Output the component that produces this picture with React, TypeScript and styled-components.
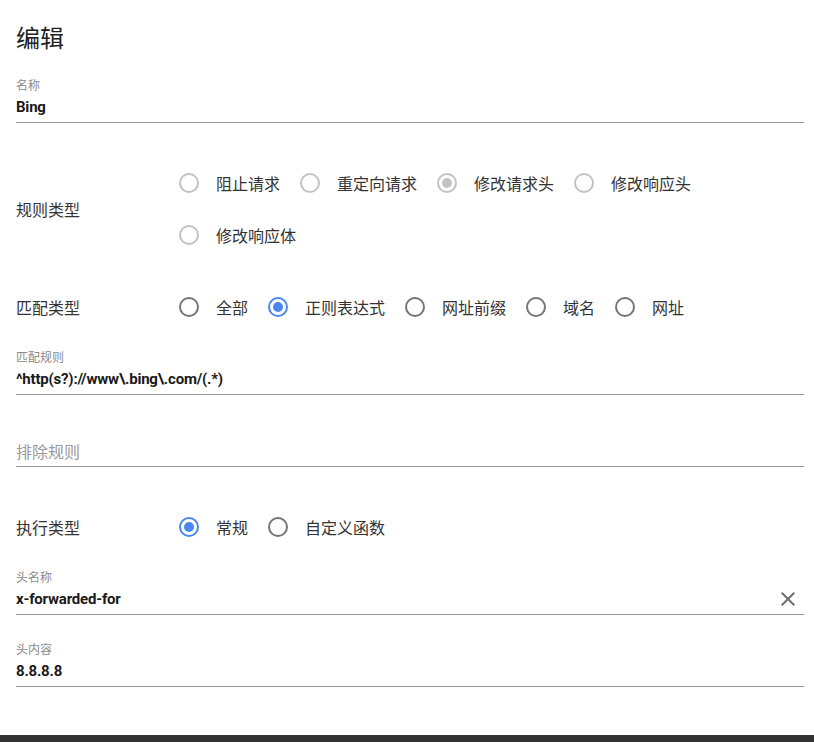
import * as React from 'react'
import styled, { createGlobalStyle } from 'styled-components'

const GlobalStyle = createGlobalStyle`
  body {
    margin: 0;
    background: #fff;
    font-family: Roboto, "Noto Sans CJK SC", sans-serif;
    color: #212121;
    overflow: hidden;
  }
`

const Page = styled.div`
  padding: 23px 10px 0 16px;
`

const Title = styled.h2`
  margin: 0;
  font-size: 24px;
  line-height: 32px;
  font-weight: 400;
  color: #212121;
`

const Field = styled.div<{ $top: number }>`
  margin-top: ${p => p.$top}px;
  border-bottom: 1px solid #949494;
`

const FieldLabel = styled.div`
  height: 16px;
  font-size: 12px;
  line-height: 16px;
  color: #8a8a8a;
`

// an empty field shows its placeholder a little lower than a value
const ValueRow = styled.div<{ $empty?: boolean }>`
  display: flex;
  align-items: center;
  padding: ${p => (p.$empty ? '3px 0 1px' : '1px 0 3px')};
`

const Input = styled.input`
  flex: 1;
  min-width: 0;
  box-sizing: border-box;
  border: none;
  outline: none;
  padding: 0;
  margin: 0;
  height: 24px;
  line-height: 24px;
  font-family: Roboto, "Noto Sans CJK SC", sans-serif;
  font-size: 15px;
  font-weight: 700;
  letter-spacing: -0.2px;
  color: #1a1a1a;
  background: transparent;

  &::placeholder {
    font-size: 16px;
    font-weight: 400;
    letter-spacing: 0;
    color: #9a9a9a;
  }
`

const ClearButton = styled.button`
  width: 24px;
  height: 24px;
  margin-right: 4px;
  padding: 0;
  border: none;
  background: none;
  display: flex;
  align-items: center;
  justify-content: center;
  cursor: pointer;
`

const Section = styled.div<{ $top: number }>`
  margin-top: ${p => p.$top}px;
  display: flex;
  align-items: center;
`

const SectionLabel = styled.div`
  width: 163px;
  flex-shrink: 0;
  font-size: 16px;
  color: #333;
`

const RadioGroup = styled.div`
  flex: 1;
  display: flex;
  flex-wrap: wrap;
  column-gap: 20px;
`

const RadioItem = styled.label`
  display: flex;
  align-items: center;
  height: 52px;
  font-size: 16px;
  color: #333;
`

const RadioCircle = styled.span<{ $checked: boolean; $disabled: boolean }>`
  box-sizing: border-box;
  width: 20px;
  height: 20px;
  border-radius: 50%;
  margin-right: 17px;
  border: 2px solid
    ${p => (p.$disabled ? '#c2c2c2' : p.$checked ? '#4a86f0' : '#757575')};
  display: flex;
  align-items: center;
  justify-content: center;

  &::after {
    content: '';
    width: 10px;
    height: 10px;
    border-radius: 50%;
    background: ${p => (p.$disabled ? '#c2c2c2' : '#4a86f0')};
    display: ${p => (p.$checked ? 'block' : 'none')};
  }
`

const Footer = styled.div`
  margin: 48px -10px 0 -16px;
  height: 60px;
  background: #343434;
`

type RadioProps = {
  options: string[]
  value: string
  disabled?: boolean
}

const Radios = ({ options, value, disabled = false }: RadioProps) => (
  <RadioGroup>
    {options.map(o => (
      <RadioItem key={o}>
        <RadioCircle $checked={o === value} $disabled={disabled} />
        {o}
      </RadioItem>
    ))}
  </RadioGroup>
)

const CloseIcon = () => (
  <svg width="24" height="24" viewBox="0 0 24 24">
    <path
      fill="#6e6e6e"
      d="M19 6.41L17.59 5 12 10.59 6.41 5 5 6.41 10.59 12 5 17.59 6.41 19 12 13.41 17.59 19 19 17.59 13.41 12z"
    />
  </svg>
)

const App = () => (
  <Page>
    <GlobalStyle />
    <Title>编辑</Title>

    <Field $top={23}>
      <FieldLabel>名称</FieldLabel>
      <ValueRow>
        <Input defaultValue="Bing" />
      </ValueRow>
    </Field>

    <Section $top={34}>
      <SectionLabel>规则类型</SectionLabel>
      <Radios
        disabled
        value="修改请求头"
        options={['阻止请求', '重定向请求', '修改请求头', '修改响应头', '修改响应体']}
      />
    </Section>

    <Section $top={20}>
      <SectionLabel>匹配类型</SectionLabel>
      <Radios value="正则表达式" options={['全部', '正则表达式', '网址前缀', '域名', '网址']} />
    </Section>

    <Field $top={17}>
      <FieldLabel>匹配规则</FieldLabel>
      <ValueRow>
        <Input defaultValue="^http(s?)://www\.bing\.com/(.*)" />
      </ValueRow>
    </Field>

    <Field $top={27}>
      <FieldLabel />
      <ValueRow $empty>
        <Input placeholder="排除规则" />
      </ValueRow>
    </Field>

    <Section $top={34}>
      <SectionLabel>执行类型</SectionLabel>
      <Radios value="常规" options={['常规', '自定义函数']} />
    </Section>

    <Field $top={17}>
      <FieldLabel>头名称</FieldLabel>
      <ValueRow>
        <Input defaultValue="x-forwarded-for" />
        <ClearButton>
          <CloseIcon />
        </ClearButton>
      </ValueRow>
    </Field>

    <Field $top={27}>
      <FieldLabel>头内容</FieldLabel>
      <ValueRow>
        <Input defaultValue="8.8.8.8" />
      </ValueRow>
    </Field>

    <Footer />
  </Page>
)

export default App
